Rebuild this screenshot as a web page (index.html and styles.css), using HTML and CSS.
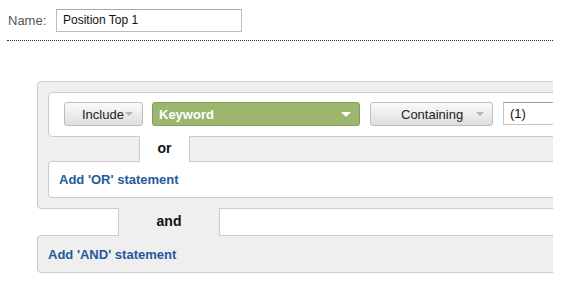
FILE: index.html
```html
<!DOCTYPE html>
<html>
<head>
<meta charset="utf-8">
<link rel="stylesheet" href="styles.css">
</head>
<body>
<div class="name-row">
  <label class="name-label">Name:</label>
  <div class="name-input">Position Top 1</div>
</div>
<div class="rule"></div>
<div class="builder">
  <div class="group">
    <div class="criteria">
      <div class="btn btn-include">Include<span class="caret caret-gray"></span></div>
      <div class="select-green">Keyword<span class="caret caret-white"></span></div>
      <div class="btn btn-contain">Containing<span class="caret caret-gray"></span></div>
      <div class="value-input">(1)</div>
    </div>
    <div class="or-row"><div class="or-tab">or</div></div>
    <div class="add-or"><a class="link">Add 'OR' statement</a></div>
  </div>
  <div class="and-row"><div class="and-tab">and</div></div>
  <div class="add-and"><a class="link">Add 'AND' statement</a></div>
</div>
</body>
</html>
```

FILE: styles.css
```css
html, body {
  margin: 0;
  padding: 0;
  background: #fff;
  font-family: "Liberation Sans", Arial, Helvetica, sans-serif;
  color: #222;
}

.name-row {
  display: flex;
  align-items: center;
  padding: 9px 0 0 8px;
  height: 23px;
}

.name-label {
  font-size: 13px;
  color: #555;
  width: 48px;
}

.name-input {
  box-sizing: border-box;
  width: 186px;
  height: 23px;
  border: 1px solid #bdbdbd;
  border-top-color: #a9a9a9;
  padding-left: 6px;
  font-size: 12px;
  line-height: 21px;
  color: #111;
}

.rule {
  margin: 8px 0 0 7px;
  width: 546px;
  border-top: 1px dotted #333;
}

.builder {
  margin: 40px 0 0 37px;
  width: 516px;
  overflow: hidden;
  padding-bottom: 6px;
}

.group {
  width: 580px;
  box-sizing: border-box;
  background: #efefef;
  border: 1px solid #cbcbcb;
  border-radius: 4px;
  padding: 10px 0 10px 10px;
}

.criteria {
  display: flex;
  align-items: flex-start;
  gap: 10px;
  background: #fff;
  border: 1px solid #cbcbcb;
  border-radius: 4px;
  padding: 9px 0 10px 15px;
  height: 24px;
}

.btn {
  box-sizing: border-box;
  height: 24px;
  border: 1px solid #bdbdbd;
  border-radius: 3px;
  background: linear-gradient(#fafafa, #dedede);
  font-size: 13px;
  color: #222;
  display: flex;
  align-items: center;
  flex: none;
}

.btn-include {
  width: 79px;
  padding-left: 17px;
  margin-right: -1px;
}

.btn-contain {
  width: 123px;
  padding-left: 30px;
}

.btn-contain .caret {
  margin-left: 13px;
}

.caret {
  display: inline-block;
  width: 0;
  height: 0;
  border-left: 4px solid transparent;
  border-right: 4px solid transparent;
}

.caret-gray {
  border-top: 4px solid #b5b5b5;
  margin-left: 1px;
}

.caret-white {
  border-top: 5px solid #fff;
  border-left-width: 5px;
  border-right-width: 5px;
  margin-left: auto;
  margin-right: 8px;
}

.select-green {
  box-sizing: border-box;
  flex: none;
  width: 208px;
  height: 24px;
  border: 1px solid #829d5a;
  border-radius: 3px;
  background: #9cb56f;
  color: #fff;
  font-size: 13px;
  font-weight: bold;
  display: flex;
  align-items: center;
  padding-left: 6px;
}

.value-input {
  box-sizing: border-box;
  flex: none;
  width: 120px;
  height: 23px;
  border: 1px solid #c4c4c4;
  border-top-color: #9a9a9a;
  font-size: 13px;
  line-height: 21px;
  padding-left: 6px;
  color: #111;
}

.or-row {
  margin: -1px 0 -1px 0;
  height: 26px;
}

.or-tab {
  position: relative;
  z-index: 1;
  box-sizing: border-box;
  margin-left: 91px;
  width: 51px;
  height: 26px;
  background: #fff;
  border-left: 1px solid #cbcbcb;
  border-right: 1px solid #cbcbcb;
  text-align: center;
  font-size: 14px;
  font-weight: bold;
  line-height: 25px;
  color: #111;
}

.add-or {
  background: #fff;
  border: 1px solid #cbcbcb;
  border-radius: 4px;
  height: 35px;
  padding-left: 10px;
  display: flex;
  align-items: center;
}

.link {
  color: #1f5a9c;
  font-size: 13px;
  font-weight: bold;
  text-decoration: none;
}

.and-row {
  margin: -1px 0 -1px 0;
  height: 28px;
}

.and-tab {
  position: relative;
  z-index: 1;
  box-sizing: border-box;
  margin-left: 81px;
  width: 102px;
  height: 28px;
  background: #efefef;
  border-left: 1px solid #cbcbcb;
  border-right: 1px solid #cbcbcb;
  text-align: center;
  font-size: 14px;
  font-weight: bold;
  line-height: 27px;
  color: #111;
}

.add-and {
  width: 580px;
  box-sizing: border-box;
  background: #efefef;
  border: 1px solid #cbcbcb;
  border-radius: 4px;
  height: 38px;
  padding-left: 10px;
  display: flex;
  align-items: center;
}
```
